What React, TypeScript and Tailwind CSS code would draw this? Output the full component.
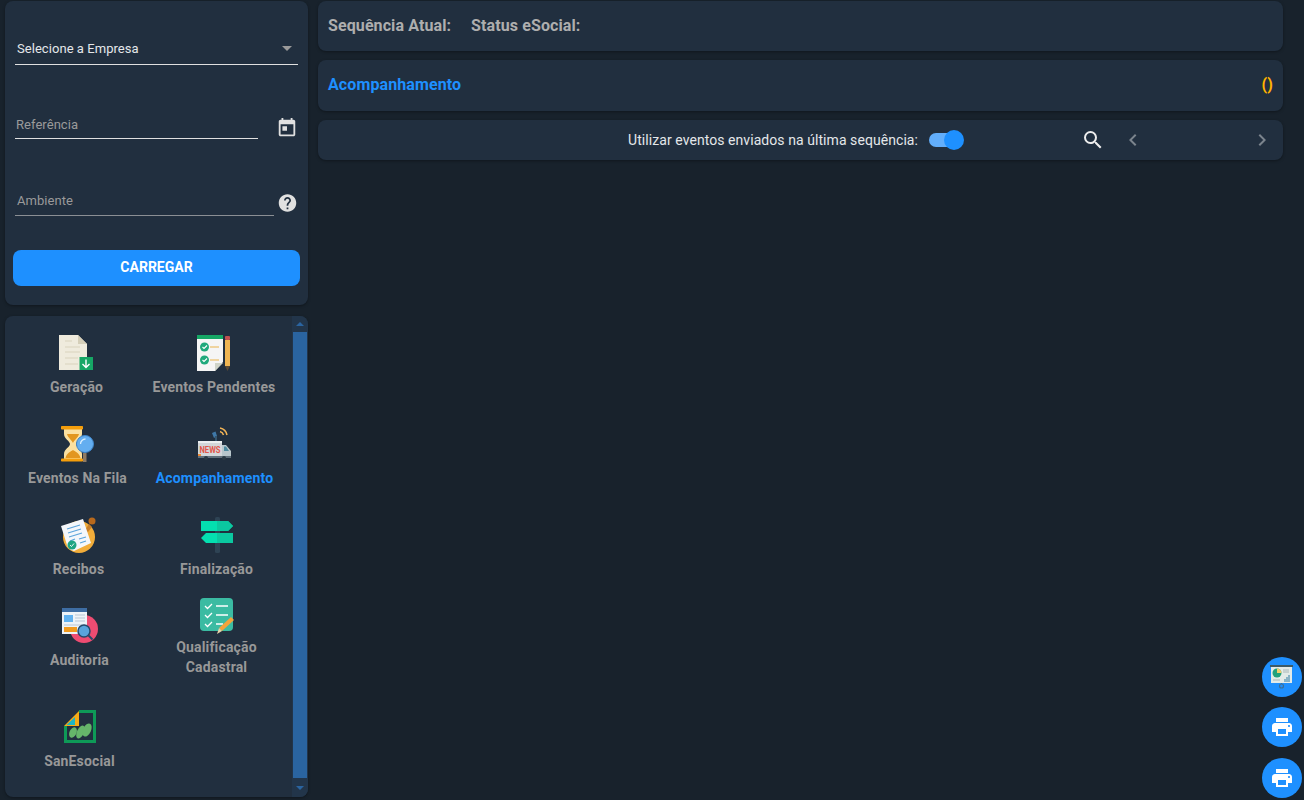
import type { ReactNode } from "react";

const card = "bg-[#212f3f] rounded-lg shadow-[0_1px_3px_rgba(0,0,0,0.35)]";

function GeracaoIcon() {
  return (
    <svg width="36" height="36" viewBox="0 0 36 36">
      <path d="M0 0h19l9 9v26H0z" fill="#efebdd" />
      <path d="M19 0l9 9h-9z" fill="#d5cfb9" />
      <path d="M6 6h7M6 12h15M6 17h15M6 23h13M6 29h13" stroke="#d9d3bd" strokeWidth="1.2" />
      <rect x="20.5" y="22" width="13.5" height="13" fill="#16a765" />
      <path d="M27 24.5v8M23.5 29l3.5 3.5 3.5-3.5" stroke="#fff" strokeWidth="1.4" fill="none" />
    </svg>
  );
}

function PendentesIcon() {
  return (
    <svg width="34" height="36" viewBox="0 0 34 36">
      <path d="M0 0h26v27l-8 9H0z" fill="#f5f5f5" />
      <rect width="26" height="4" fill="#16a765" />
      <path d="M18 36v-8h8z" fill="#cfd3c8" />
      <circle cx="7.5" cy="12" r="4.5" fill="#1fa97c" />
      <circle cx="7.5" cy="25" r="4.5" fill="#1fa97c" />
      <path d="M5.500 12l1.500 1.500 3-3M5.500 25l1.500 1.500 3-3" stroke="#fff" strokeWidth="1.1" fill="none" />
      <path d="M13 12h9M13 25h9" stroke="#e9b44c" strokeWidth="1.2" />
      <rect x="28" y="1" width="5" height="4" rx="1" fill="#c2504f" />
      <rect x="28" y="5" width="5" height="26" fill="#efb552" />
      <path d="M28 31h5l-2.500 5z" fill="#5b4a35" />
    </svg>
  );
}

function FilaIcon() {
  return (
    <svg width="34" height="36" viewBox="0 0 34 36">
      <path d="M3 3h18v5c0 5-6 7-6 10 0 3 6 5 6 10v5H3v-5c0-5 6-7 6-10 0-3-6-5-6-10z" fill="#fbe0a0" />
      <path d="M6 8h12c-1 4-5 6-6 9-1-3-5-5-6-9zM4.500 32c1-5 6-7 7.500-8 1.500 1 6.500 3 7.500 8z" fill="#e2961f" />
      <rect x="0" y="0" width="22" height="3.500" rx="0.800" fill="#f59e0b" />
      <rect x="0" y="32.500" width="22" height="3" rx="0.800" fill="#f59e0b" />
      <rect x="22" y="27" width="3.500" height="9" fill="#8f7a62" />
      <circle cx="24" cy="18" r="8.500" fill="#64aef0" stroke="#3f85c9" />
      <path d="M19.500 18a5 5 0 0 1 5-5" stroke="#d9efff" strokeWidth="1.300" fill="none" />
    </svg>
  );
}

function NewsIcon() {
  return (
    <svg className="ml-[1px]" width="34" height="34" viewBox="0 0 34 34">
      <path d="M16 11l-2-5 3.500-1.500 1.500 4.500z" fill="#3f78a8" />
      <rect x="17" y="9" width="2" height="5" fill="#35566f" />
      <path d="M22 1a9 9 0 0 1 7 7M22 4.500a5 5 0 0 1 3.500 3.500" stroke="#f2b456" strokeWidth="1.500" fill="none" />
      <rect x="0" y="14" width="24" height="16" fill="#d3d7da" />
      <rect x="0" y="14" width="24" height="2" fill="#eceff1" />
      <path d="M24 18h4l5 6v6h-9z" fill="#b8c6cc" />
      <path d="M26 19.500h2l3 4.500h-5z" fill="#4d8aa0" />
      <rect x="0" y="29" width="33" height="2" fill="#5f6f7b" />
      <rect x="0" y="27" width="3" height="2" fill="#f08b35" />
      <text x="1.500" y="25.500" fontFamily="Roboto, sans-serif" fontSize="9" fontWeight="700" fill="#e2574c" textLength="21" lengthAdjust="spacingAndGlyphs">NEWS</text>
      <circle cx="8" cy="31" r="2" fill="#2b3a45" />
      <circle cx="26" cy="31" r="2" fill="#2b3a45" />
    </svg>
  );
}

function RecibosIcon() {
  return (
    <svg width="36" height="36" viewBox="0 0 36 36">
      <circle cx="18" cy="20" r="16" fill="#f2ad3a" />
      <circle cx="31" cy="4" r="3.500" fill="#b8691c" />
      <path d="M28 7l-4 6 3 2 4-5z" fill="#c97f28" />
      <path d="M0 9l22-7 8 24-17 8q-6-2-7-6z" fill="#f4f7fb" />
      <path d="M6 12l13-4M7 16l13-4M8 20l13-4M9 24l5-2M18 22l7-2M19 26l6-2" stroke="#5ba4dc" strokeWidth="1.200" />
      <circle cx="11" cy="28" r="4.500" fill="#1fa582" />
      <path d="M9 28l1.500 1.500 2.500-3" stroke="#fff" strokeWidth="0.900" fill="none" />
    </svg>
  );
}

function FinalizacaoIcon() {
  return (
    <svg width="32" height="36" viewBox="0 0 32 36">
      <rect x="14" y="0" width="5" height="36" rx="1.500" fill="#2e4354" />
      <path d="M0 4h27l5 5-5 5H0z" fill="#04dfb0" />
      <path d="M16 4h11l5 5-5 5H16z" fill="#0bc8a0" />
      <path d="M32 16H5l-5 5 5 5h27z" fill="#04dfb0" />
      <path d="M16 16h16v10H16z" fill="#0bc8a0" />
    </svg>
  );
}

function AuditoriaIcon() {
  return (
    <svg width="36" height="36" viewBox="0 0 36 36">
      <circle cx="22" cy="21" r="14" fill="#ee4c72" />
      <rect x="0" y="0" width="25" height="26" fill="#eef3f8" />
      <rect x="0" y="0" width="25" height="4" fill="#3e6da3" />
      <rect x="2" y="7" width="9" height="7" fill="#62b2f0" />
      <path d="M13 7h10M13 10h10M13 13h10M2 17h21" stroke="#b9c7d6" strokeWidth="1" />
      <rect x="2" y="19" width="13" height="5" fill="#f29b1f" />
      <circle cx="22" cy="23" r="6" fill="#5aa4dc" stroke="#264a6b" strokeWidth="1.500" />
      <path d="M26.500 27.500l4 4" stroke="#264a6b" strokeWidth="2" />
    </svg>
  );
}

function QualificacaoIcon() {
  return (
    <svg width="36" height="36" viewBox="0 0 36 36">
      <rect x="1" y="0" width="33" height="33" rx="4" fill="#3bbba2" />
      <path d="M6 8l2.500 2.500L13 6M6 17l2.500 2.500L13 15M6 26l2.500 2.500L13 24" stroke="#fff" strokeWidth="1.300" fill="none" />
      <path d="M17 8h12M17 17h12M17 26h7" stroke="#fff" strokeWidth="1.300" />
      <path d="M20 30l12-11 3 3-12 11z" fill="#f2a33a" />
      <path d="M20 30l3 3-5 3z" fill="#e7d2a8" />
    </svg>
  );
}

function SanIcon() {
  return (
    <svg width="34" height="34" viewBox="0 0 34 34">
      <path d="M16 1.500h15.500V31.500H2.500V16" fill="none" stroke="#0e9a57" strokeWidth="3" />
      <path d="M1 16L16 1v15z" fill="#f4ac16" />
      <path d="M3.500 15L12 7v8z" fill="#1cb5c4" />
      <ellipse cx="10" cy="22.500" rx="3.500" ry="5.500" transform="rotate(25 10 22.500)" fill="#66b56a" />
      <ellipse cx="17.500" cy="22" rx="3.500" ry="7" transform="rotate(25 17.500 22)" fill="#66b56a" />
      <ellipse cx="24" cy="20" rx="4" ry="7" transform="rotate(25 24 20)" fill="#66b56a" />
    </svg>
  );
}

function PresentationIcon() {
  return (
    <svg width="24" height="26" viewBox="0 0 24 26">
      <rect x="0" y="1" width="23" height="2" fill="#3d5a66" />
      <rect x="1" y="3" width="21" height="16" fill="#e3ebe8" />
      <circle cx="7" cy="9" r="4.500" fill="#22a27c" />
      <path d="M7 9V4.500A4.500 4.500 0 0 1 11.500 9z" fill="#f2ce6b" />
      <path d="M3 16h7M13 6h6M13 8h6" stroke="#a9b8b8" strokeWidth="1" />
      <path d="M15 18v-3M17 18v-5M19 18v-7" stroke="#4d8fb0" strokeWidth="1.200" />
      <circle cx="11.500" cy="22" r="2" fill="none" stroke="#3d6f96" strokeWidth="1.200" />
      <path d="M11.500 19v1" stroke="#3d6f96" />
    </svg>
  );
}

function PrintIcon() {
  return (
    <svg width="24" height="24" viewBox="0 0 24 24" fill="#fff">
      <path d="M19 8H5c-1.660 0-3 1.340-3 3v6h4v4h12v-4h4v-6c0-1.660-1.340-3-3-3zm-3 11H8v-5h8v5zm3-7c-.550 0-1-.450-1-1s.450-1 1-1 1 .450 1 1-.450 1-1 1zm-1-9H6v4h12V3z" />
    </svg>
  );
}

function FloatBtn({ className, children }: { className: string; children: ReactNode }) {
  return (
    <button className={`absolute left-[1262px] w-10 h-10 rounded-full bg-[#1e90ff] flex items-center justify-center ${className}`}>
      {children}
    </button>
  );
}

function MenuItem({
  icon,
  label,
  active,
  className,
}: {
  icon: ReactNode;
  label: ReactNode;
  active?: boolean;
  className?: string;
}) {
  return (
    <div className={`flex flex-col items-center h-[91px] ${className ?? ""}`}>
      <div className="h-[36px] flex items-center justify-center">{icon}</div>
      <span
        className={`mt-[6px] text-[14px] leading-[20px] font-bold tracking-[0.15px] text-center whitespace-nowrap ${active ? "text-[#1e90ff]" : "text-[#989898]"}`}
      >
        {label}
      </span>
    </div>
  );
}

export default function App() {
  return (
    <div className="relative w-[1304px] h-[800px] overflow-hidden bg-[#18222c] font-['Roboto',sans-serif] flex">
      <aside className="w-[303px] ml-[5px] flex flex-col">
        <section className={`${card} h-[304px] mt-px px-[10px] flex flex-col`}>
          <div className="mt-[34px] w-[283px] h-[30px] border-b border-[#e0e0e0] flex items-center justify-between pl-[2px] pr-[6px] pb-[2px]">
            <span className="text-[13px] tracking-[0.05px] text-[#e4e7ea]">Selecione a Empresa</span>
            <span className="w-0 h-0 border-x-[5px] border-x-transparent border-t-[5px] border-t-[#9a9a9a]" />
          </div>
          <div className="mt-[44px] flex items-start">
            <div className="w-[243px] shrink-0 h-[30px] border-b border-[#e0e0e0] pl-px pt-[2px] flex items-center">
              <span className="text-[13px] tracking-[0.05px] text-[#9a9a9a]">Referência</span>
            </div>
            <svg className="ml-[18px] mt-[7px]" width="24" height="24" viewBox="0 0 24 24" fill="#e0e0e0">
              <path d="M19 3h-1V1h-2v2H8V1H6v2H5c-1.110 0-1.990.900-1.990 2L3 19c0 1.100.890 2 2 2h14c1.100 0 2-.900 2-2V5c0-1.100-.900-2-2-2zm0 16H5V8h14v11zM7 10h5v5H7z" />
            </svg>
          </div>
          <div className="mt-[46px] flex items-start">
            <div className="w-[259px] shrink-0 h-[30px] border-b border-[#8b8f94] pl-[2px] flex items-center">
              <span className="text-[13px] tracking-[0.05px] text-[#9a9a9a]">Ambiente</span>
            </div>
            <svg className="ml-[3px] mt-[5px]" width="24" height="24" viewBox="0 0 24 24" fill="#e0e0e0">
              <path d="M12 2C6.480 2 2 6.480 2 12s4.480 10 10 10 10-4.480 10-10S17.520 2 12 2zm1 17h-2v-2h2v2zm2.070-7.750l-.900.920C13.450 12.900 13 13.500 13 15h-2v-.500c0-1.100.450-2.100 1.170-2.830l1.240-1.260c.370-.360.590-.860.590-1.410 0-1.100-.900-2-2-2s-2 .900-2 2H8c0-2.210 1.790-4 4-4s4 1.790 4 4c0 .880-.360 1.680-.930 2.250z" />
            </svg>
          </div>
          <button className="mt-[34px] -ml-[2px] w-[287px] h-[36px] pb-px rounded-lg bg-[#1e90ff] text-white text-[14px] font-bold">
            CARREGAR
          </button>
        </section>
        <section className={`${card} mt-[11px] h-[481px] flex overflow-hidden`}>
          <div className="w-[287px] pt-[19px] grid grid-cols-[138px_138px] content-start">
            <MenuItem className="ml-[5px] w-[133px]" icon={<GeracaoIcon />} label="Geração" />
            <MenuItem className="ml-[4px]" icon={<PendentesIcon />} label="Eventos Pendentes" />
            <MenuItem className="ml-[5px] w-[135px]" icon={<FilaIcon />} label="Eventos Na Fila" />
            <MenuItem className="ml-[5px]" icon={<NewsIcon />} label="Acompanhamento" active />
            <MenuItem className="ml-[7px] w-[133px]" icon={<RecibosIcon />} label="Recibos" />
            <MenuItem className="ml-[9px]" icon={<FinalizacaoIcon />} label="Finalização" />
            <MenuItem className="ml-[8px] w-[133px]" icon={<AuditoriaIcon />} label="Auditoria" />
            <div className="flex flex-col items-center ml-[9px] h-[101px] -mt-[10px]">
              <QualificacaoIcon />
              <span className="mt-[3px] text-[14px] leading-[20px] font-bold tracking-[0.15px] text-center text-[#989898]">
                Qualificação
                <br />
                Cadastral
              </span>
            </div>
            <MenuItem className="ml-[8px] w-[133px] mt-[10px]" icon={<SanIcon />} label="SanEsocial" />
          </div>
          <div className="w-[16px] bg-[#22354a] flex flex-col items-center">
            <div className="h-[16px] flex items-center justify-center">
              <span className="w-0 h-0 border-x-[4px] border-x-transparent border-b-[4px] border-b-[#2a64a0]" />
            </div>
            <div className="w-[14px] h-[446px] bg-[#2a64a0]" />
            <div className="h-[19px] flex items-center justify-center">
              <span className="w-0 h-0 border-x-[4px] border-x-transparent border-t-[4px] border-t-[#2a64a0]" />
            </div>
          </div>
        </section>
      </aside>

      <main className="w-[965px] ml-[10px] flex flex-col">
        <div className={`${card} mt-px h-[50px] px-[10px] flex items-center text-[16px] font-bold tracking-[0.1px] text-[#aeaeae]`}>
          <span>Sequência Atual:</span>
          <span className="ml-[20px]">Status eSocial:</span>
        </div>
        <div className={`${card} mt-[9px] h-[51px] px-[10px] pb-[2px] flex items-center justify-between text-[16px] font-bold tracking-[0.1px]`}>
          <span className="text-[#1e90ff]">Acompanhamento</span>
          <span className="text-[#ffb300]">()</span>
        </div>
        <div className={`${card} mt-[9px] h-[40px] flex items-center relative pl-[310px]`}>
          <span className="text-[14px] tracking-[0.065px] text-[#e4e7ea]">Utilizar eventos enviados na última sequência:</span>
          <span className="relative ml-[11px] w-[35px] h-[20px] flex items-center">
            <span className="w-[34px] h-[14px] rounded-full bg-[#62aefb]" />
            <span className="absolute right-0 w-[20px] h-[20px] rounded-full bg-[#1e90ff]" />
          </span>
          <svg className="ml-[117px]" width="24" height="24" viewBox="0 0 24 24" fill="#eeeeee">
            <path d="M15.500 14h-.790l-.280-.270A6.470 6.470 0 0 0 16 9.500 6.500 6.500 0 1 0 9.500 16c1.610 0 3.090-.590 4.230-1.570l.270.280v.790l5 4.990L20.490 19l-4.990-5zm-6 0C7.010 14 5 11.990 5 9.500S7.010 5 9.500 5 14 7.010 14 9.500 11.990 14 9.500 14z" />
          </svg>
          <svg className="ml-[16px]" width="24" height="24" viewBox="0 0 24 24" fill="#7b848d">
            <path d="M15.410 7.410L14 6l-6 6 6 6 1.410-1.410L10.830 12z" />
          </svg>
          <svg className="ml-[105px]" width="24" height="24" viewBox="0 0 24 24" fill="#7b848d">
            <path d="M10 6L8.590 7.410 13.170 12l-4.580 4.590L10 18l6-6z" />
          </svg>
        </div>
      </main>

      <FloatBtn className="top-[657px]"><PresentationIcon /></FloatBtn>
      <FloatBtn className="top-[707px]"><PrintIcon /></FloatBtn>
      <FloatBtn className="top-[758px]"><PrintIcon /></FloatBtn>
    </div>
  );
}
